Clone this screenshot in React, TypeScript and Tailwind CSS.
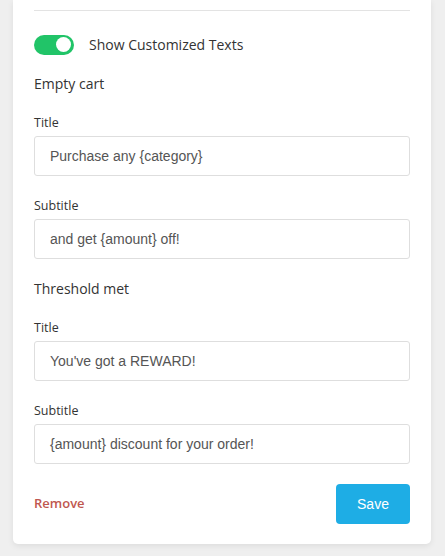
import React from "react";

function Field({ label, value }: { label: string; value: string }) {
  return (
    <div className="flex flex-col">
      <div className="h-4 text-[12.5px] leading-[18px] text-[#333]">{label}</div>
      <div className="mt-[6px] flex h-[40px] items-center rounded-[3px] border border-[#dedede] bg-white pl-[15px] text-[14px] text-[#555] [font-family:'Liberation_Sans',Arial,sans-serif]">
        {value}
      </div>
    </div>
  );
}

export default function App() {
  return (
    <div className="min-h-[556px] bg-[#efefef] pl-[13px] pr-[14px] pb-[12px] [font-family:'Open_Sans',sans-serif]">
      <div className="rounded-b-[5px] bg-white px-[21px] pb-[20px] pt-[10px] shadow-[0_2px_6px_rgba(0,0,0,0.08)]">
        <div className="h-px bg-[#e3e3e3]" />
        <div className="mt-[23px] flex items-center">
          <div className="relative h-[20px] w-[40px] rounded-full bg-[#21c468]">
            <div className="absolute right-[3px] top-[2.5px] h-[15px] w-[15px] rounded-full bg-white" />
          </div>
          <span className="ml-[15px] text-[14px] text-[#333]">Show Customized Texts</span>
        </div>
        <div className="mt-[18px] h-5 text-[14px] leading-[22px] text-[#333]">Empty cart</div>
        <div className="mt-[21px] flex flex-col gap-[21px]">
          <Field label="Title" value="Purchase any {category}" />
          <Field label="Subtitle" value="and get {amount} off!" />
        </div>
        <div className="mt-[19px] h-5 text-[14px] leading-[22px] text-[#333]">Threshold met</div>
        <div className="mt-[21px] flex flex-col gap-[21px]">
          <Field label="Title" value="You've got a REWARD!" />
          <Field label="Subtitle" value="{amount} discount for your order!" />
        </div>
        <div className="mt-[20px] flex items-center justify-between">
          <span className="text-[13px] font-semibold text-[#bf574f]">Remove</span>
          <button className="h-[40px] w-[74px] rounded-[4px] bg-[#1eade5] text-[14px] text-white [font-family:'Liberation_Sans',Arial,sans-serif]">
            Save
          </button>
        </div>
      </div>
    </div>
  );
}
